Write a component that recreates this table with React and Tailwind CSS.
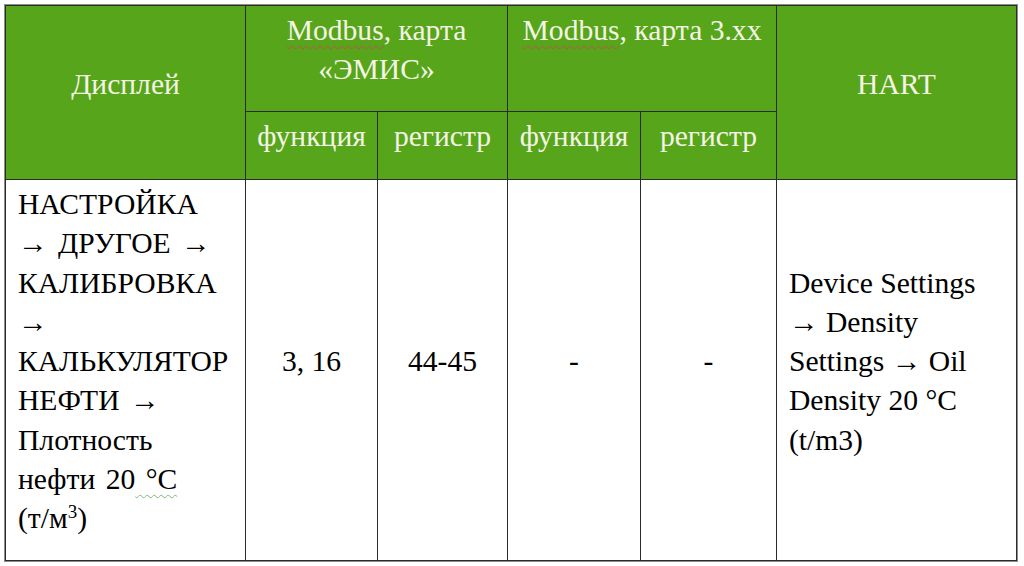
export default function App() {
  const head = "border border-[#2b2b2b] bg-[#56a51a] text-[#f4f4e4] text-center align-middle pt-[5px] pb-[21px] font-normal";
  const cell = "border border-[#2b2b2b] text-black align-middle pt-[5px] pb-[21px]";
  const squiggleRed = "underline decoration-wavy decoration-[#c0504d] decoration-1 underline-offset-[5px]";

  return (
    <div className="w-[1024px] h-[566px] bg-white pt-[4px] pl-[4px] font-['Liberation_Serif','Times_New_Roman',serif]">
      <div className="inline-block border border-[#8c8c8c]">
        <table className="table-fixed border-collapse text-[29.6px] leading-[39.3px]">
          <colgroup>
            <col className="w-[240px]" />
            <col className="w-[132px]" />
            <col className="w-[130px]" />
            <col className="w-[133px]" />
            <col className="w-[136px]" />
            <col className="w-[240px]" />
          </colgroup>
          <thead>
            <tr className="h-[106px]">
              <th rowSpan={2} className={head}>Дисплей</th>
              <th colSpan={2} className={head + " align-top"}>
                <span className={squiggleRed}>Modbus</span>, карта
                <br />
                «ЭМИС»
              </th>
              <th colSpan={2} className={head + " align-top"}>
                <span className={squiggleRed}>Modbus</span>, карта 3.xx
              </th>
              <th rowSpan={2} className={head}>HART</th>
            </tr>
            <tr className="h-[68px]">
              <th className={head + " align-top"}>функция</th>
              <th className={head + " align-top"}>регистр</th>
              <th className={head + " align-top"}>функция</th>
              <th className={head + " align-top"}>регистр</th>
            </tr>
          </thead>
          <tbody>
            <tr className="h-[380px]">
              <td className={cell + " text-left pl-[12px] pr-[2px] [word-spacing:3px]"}>
                НАСТРОЙКА
                <br />→ ДРУГОЕ →
                <br />КАЛИБРОВКА
                <br />→
                <br />КАЛЬКУЛЯТОР
                <br />НЕФТИ →
                <br />Плотность
                <br />
                нефти 20
                <span className="underline decoration-wavy decoration-[#7fb77e] decoration-1 underline-offset-[5px]">
                  {" °С"}
                </span>
                <br />
                (т/м<span className="relative -top-[10px] text-[19px] leading-none">3</span>)
              </td>
              <td className={cell + " text-center"}>3, 16</td>
              <td className={cell + " text-center"}>44-45</td>
              <td className={cell + " text-center"}>-</td>
              <td className={cell + " text-center"}>-</td>
              <td className={cell + " text-left pl-[12px] pr-[2px]"}>
                Device Settings
                <br />→ Density
                <br />Settings → Oil
                <br />Density 20 °C
                <br />(t/m3)
              </td>
            </tr>
          </tbody>
        </table>
      </div>
    </div>
  );
}
